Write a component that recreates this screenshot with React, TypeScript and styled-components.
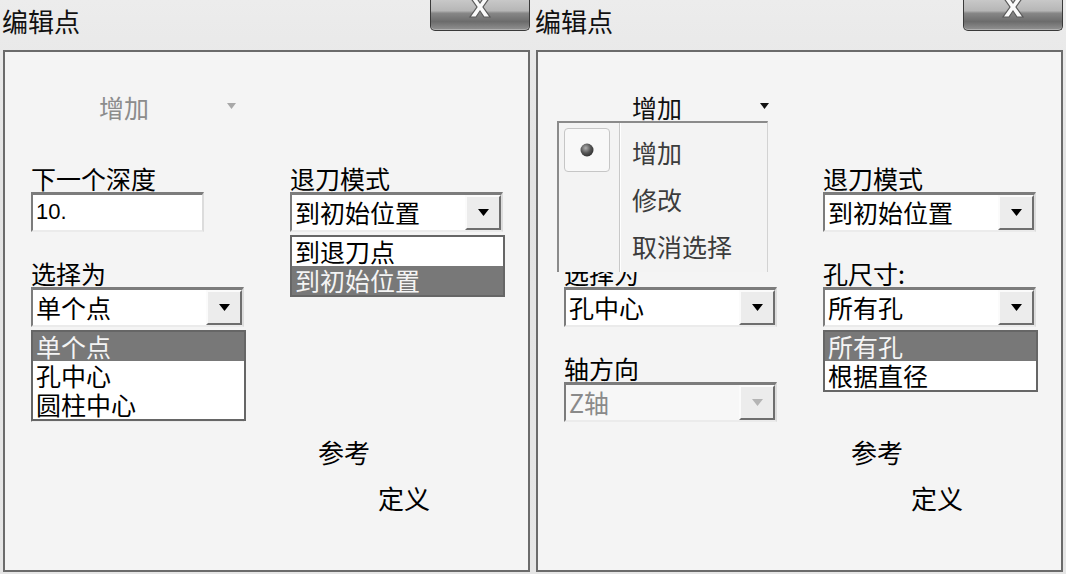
import styled, { createGlobalStyle } from "styled-components";

const GlobalStyle = createGlobalStyle`
  html, body {
    margin: 0;
    padding: 0;
    background: #e4e4e4;
  }
  body {
    font-family: "Noto Sans CJK SC", "Noto Sans", sans-serif;
  }
`;

const Screen = styled.div`
  display: flex;
  width: 1066px;
  height: 574px;
  overflow: hidden;
`;

const Dialog = styled.div`
  width: 533px;
  height: 574px;
  display: flex;
  flex-direction: column;
  background: linear-gradient(to bottom, #ececec, #e3e3e3 30%, #e6e6e6);
`;

const TitleBar = styled.div`
  height: 50px;
  flex-shrink: 0;
  display: flex;
  justify-content: space-between;
  align-items: flex-start;
`;

const Title = styled.div`
  font-size: 26px;
  line-height: 30px;
  padding: 6px 0 0 2px;
  color: #111;
`;

const CloseButton = styled.div`
  width: 100px;
  height: 31px;
  box-sizing: border-box;
  margin-right: 3px;
  border: 1px solid #3a3a3a;
  border-top: none;
  border-radius: 0 0 5px 5px;
  background: linear-gradient(
    to bottom,
    #c8c8c8 0%,
    #b6b6b6 36%,
    #878787 44%,
    #6c6c6c 72%,
    #929292 100%
  );
  box-shadow: inset 0 -1px 0 #b0b0b0;
  display: flex;
  justify-content: center;
  align-items: flex-start;
`;

const Body = styled.div`
  flex: 1;
  margin: 0 3px 2px 3px;
  border: 2px solid #6b6b6b;
  background: #f4f4f4;
  padding-top: 42px;
`;

const ModeRow = styled.div`
  position: relative;
  display: flex;
  align-items: center;
  margin-left: 94px;
  height: 27px;
`;

const ModeText = styled.span<{ $disabled?: boolean }>`
  font-size: 25px;
  line-height: 27px;
  color: ${({ $disabled }) => ($disabled ? "#8c8c8c" : "#111")};
`;

const ModeArrow = styled.svg`
  margin-left: 78px;
  margin-top: -4px;
`;

const Menu = styled.div`
  position: absolute;
  top: 27px;
  left: -75px;
  width: 211px;
  height: 151px;
  box-sizing: border-box;
  border-top: 2px solid #8a8a8a;
  border-left: 2px solid #8a8a8a;
  border-right: 1px solid #d2d2d2;
  background: #f3f3f3;
  display: flex;
  z-index: 4;
`;

const MenuGutter = styled.div`
  width: 61px;
  border-right: 1px solid #c8c8c8;
  box-shadow: 1px 0 0 #ffffff;
  padding: 5px 0 0 5px;
  box-sizing: border-box;
`;

const CheckBox = styled.div`
  width: 46px;
  height: 44px;
  box-sizing: border-box;
  border: 1px solid #c6c6c6;
  border-radius: 4px;
  background: #f8f8f8;
  display: flex;
  align-items: center;
  justify-content: center;
`;

const MenuItems = styled.div`
  flex: 1;
  padding: 6px 0 0 12px;
`;

const MenuItem = styled.div`
  font-size: 25px;
  line-height: 47px;
  color: #3c3c3c;
`;

const Fields = styled.div`
  display: grid;
  grid-template-columns: 213px 213px;
  grid-template-rows: repeat(3, 67px);
  column-gap: 46px;
  row-gap: 28px;
  margin: 44px 0 0 26px;
`;

const Field = styled.div<{ $col: number; $row: number }>`
  position: relative;
  grid-column: ${({ $col }) => $col};
  grid-row: ${({ $row }) => $row};
  display: flex;
  flex-direction: column;
`;

const Label = styled.div`
  height: 27px;
  font-size: 25px;
  line-height: 27px;
  color: #000;
  white-space: nowrap;
`;

const Sunken = styled.div<{ $width?: number; $disabled?: boolean }>`
  width: ${({ $width }) => ($width ? `${$width}px` : "100%")};
  height: 40px;
  box-sizing: border-box;
  display: flex;
  border-style: solid;
  border-width: 3px 2px 2px 2px;
  border-color: #7c7c7c #dcdcdc #ebebeb #7c7c7c;
  background: ${({ $disabled }) => ($disabled ? "#f7f7f7" : "#ffffff")};
`;

const Value = styled.div<{ $disabled?: boolean }>`
  flex: 1;
  font-size: 25px;
  line-height: 34px;
  padding-left: 3px;
  white-space: nowrap;
  color: ${({ $disabled }) => ($disabled ? "#8a8a8a" : "#000")};
`;

const NumberValue = styled.div`
  flex: 1;
  font-family: "Liberation Sans", Arial, sans-serif;
  font-size: 22px;
  line-height: 34px;
  padding-left: 3px;
  color: #000;
`;

const DropButton = styled.div`
  width: 36px;
  box-sizing: border-box;
  border: 2px solid;
  border-color: #fbfbfb #6e6e6e #6e6e6e #fbfbfb;
  background: #ececec;
  display: flex;
  align-items: center;
  justify-content: center;
`;

const ListBox = styled.div`
  position: absolute;
  top: calc(100% + 3px);
  left: 0;
  width: 215px;
  box-sizing: border-box;
  border: 2px solid #666;
  background: #fff;
  z-index: 3;
`;

const ListItem = styled.div<{ $selected?: boolean }>`
  height: 29px;
  font-size: 25px;
  line-height: 29px;
  padding-left: 3px;
  white-space: nowrap;
  background: ${({ $selected }) => ($selected ? "#787878" : "#fff")};
  color: ${({ $selected }) => ($selected ? "#f4f4f4" : "#000")};
`;

const Footer = styled.div`
  display: flex;
  flex-direction: column;
  align-items: flex-start;
  gap: 18px;
  margin: 16px 0 0 313px;
`;

const FooterItem = styled.div<{ $indent?: number }>`
  font-size: 26px;
  line-height: 28px;
  color: #000;
  margin-left: ${({ $indent }) => $indent || 0}px;
`;

const Triangle = ({ color = "#000" }: { color?: string }) => (
  <svg width="11" height="7" viewBox="0 0 11 7">
    <polygon points="0,0 11,0 5.5,7" fill={color} />
  </svg>
);

const CloseGlyph = () => (
  <svg width="26" height="22" viewBox="0 0 26 22" style={{ marginTop: -4 }}>
    <path
      d="M3 1 L9 1 L13 7 L17 1 L23 1 L16 11 L23 21 L17 21 L13 15 L9 21 L3 21 L10 11 Z"
      fill="#fafafa"
      stroke="#5a5a5a"
      strokeWidth="1.2"
    />
  </svg>
);

const RadioDot = () => (
  <svg width="14" height="14" viewBox="0 0 14 14">
    <defs>
      <radialGradient id="dot" cx="40%" cy="35%" r="65%">
        <stop offset="0%" stopColor="#b0b0b0" />
        <stop offset="60%" stopColor="#555" />
        <stop offset="100%" stopColor="#333" />
      </radialGradient>
    </defs>
    <circle cx="7" cy="7" r="6.5" fill="url(#dot)" />
  </svg>
);

type FieldDef = {
  col: number;
  row: number;
  label: string;
  input?: string;
  select?: string;
  disabled?: boolean;
  list?: string[];
  selected?: number;
};

type PanelDef = {
  modeDisabled: boolean;
  menuOpen: boolean;
  fields: FieldDef[];
};

// the left dialog's axis field sits under the open list: only its edge shows
const panels: PanelDef[] = [
  {
    modeDisabled: true,
    menuOpen: false,
    fields: [
      { col: 1, row: 1, label: "下一个深度", input: "10." },
      {
        col: 1,
        row: 2,
        label: "选择为",
        select: "单个点",
        list: ["单个点", "孔中心", "圆柱中心"],
        selected: 0,
      },
      { col: 1, row: 3, label: "", select: "", disabled: true },
      {
        col: 2,
        row: 1,
        label: "退刀模式",
        select: "到初始位置",
        list: ["到退刀点", "到初始位置"],
        selected: 1,
      },
    ],
  },
  {
    modeDisabled: false,
    menuOpen: true,
    fields: [
      { col: 1, row: 2, label: "选择为", select: "孔中心" },
      { col: 1, row: 3, label: "轴方向", select: "Z轴", disabled: true },
      { col: 2, row: 1, label: "退刀模式", select: "到初始位置" },
      {
        col: 2,
        row: 2,
        label: "孔尺寸:",
        select: "所有孔",
        list: ["所有孔", "根据直径"],
        selected: 0,
      },
    ],
  },
];

const menuItems = ["增加", "修改", "取消选择"];

const EditPointDialog = ({ panel }: { panel: PanelDef }) => (
  <Dialog>
    <TitleBar>
      <Title>编辑点</Title>
      <CloseButton>
        <CloseGlyph />
      </CloseButton>
    </TitleBar>
    <Body>
      <ModeRow>
        <ModeText $disabled={panel.modeDisabled}>增加</ModeText>
        <ModeArrow width="9" height="6" viewBox="0 0 9 6">
          <polygon
            points="0,0 9,0 4.5,6"
            fill={panel.modeDisabled ? "#a8a8a8" : "#111"}
          />
        </ModeArrow>
        {panel.menuOpen && (
          <Menu>
            <MenuGutter>
              <CheckBox>
                <RadioDot />
              </CheckBox>
            </MenuGutter>
            <MenuItems>
              {menuItems.map((item) => (
                <MenuItem key={item}>{item}</MenuItem>
              ))}
            </MenuItems>
          </Menu>
        )}
      </ModeRow>
      <Fields>
        {panel.fields.map((field) => (
          <Field
            key={`${field.col}_${field.row}`}
            $col={field.col}
            $row={field.row}
          >
            <Label>{field.label}</Label>
            {field.input !== undefined ? (
              <Sunken $width={173}>
                <NumberValue>{field.input}</NumberValue>
              </Sunken>
            ) : (
              <Sunken $disabled={field.disabled}>
                <Value $disabled={field.disabled}>{field.select}</Value>
                <DropButton>
                  <Triangle color={field.disabled ? "#b4b4b4" : "#000"} />
                </DropButton>
              </Sunken>
            )}
            {field.list && (
              <ListBox>
                {field.list.map((item, index) => (
                  <ListItem key={item} $selected={index === field.selected}>
                    {item}
                  </ListItem>
                ))}
              </ListBox>
            )}
          </Field>
        ))}
      </Fields>
      <Footer>
        <FooterItem>参考</FooterItem>
        <FooterItem $indent={60}>定义</FooterItem>
      </Footer>
    </Body>
  </Dialog>
);

const App = () => (
  <>
    <GlobalStyle />
    <Screen>
      {panels.map((panel, index) => (
        <EditPointDialog key={index} panel={panel} />
      ))}
    </Screen>
  </>
);

export default App;
